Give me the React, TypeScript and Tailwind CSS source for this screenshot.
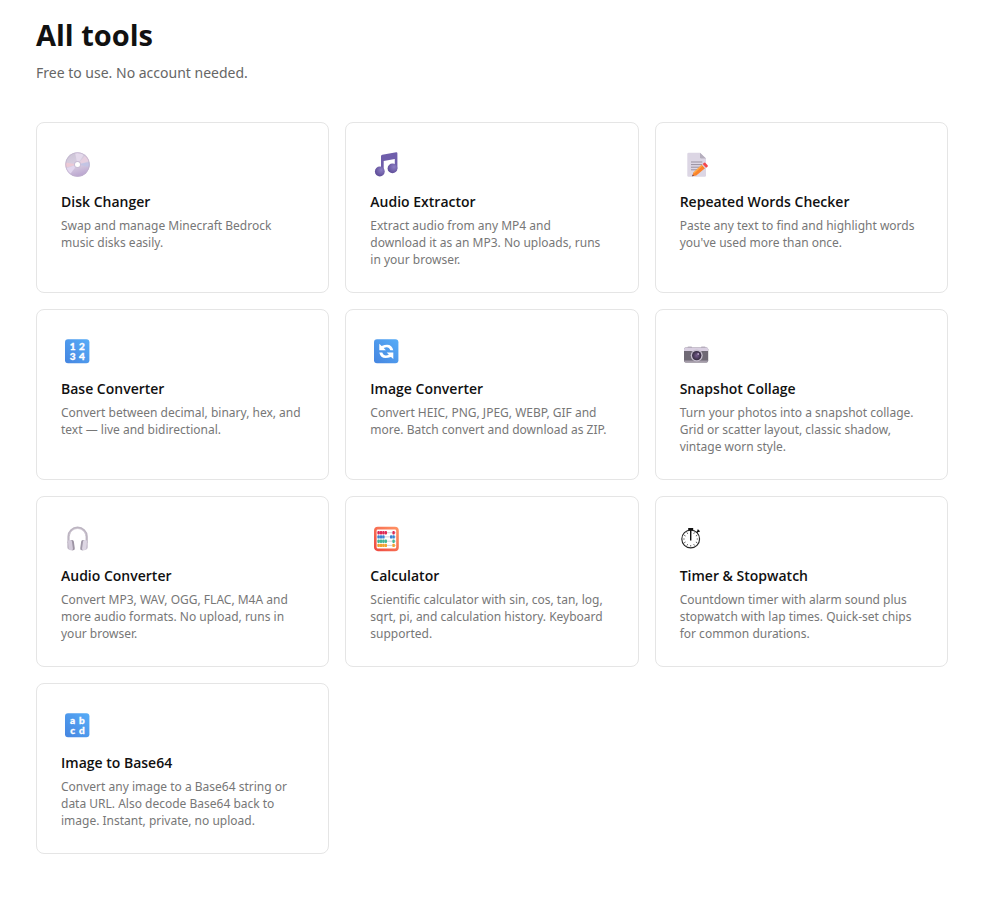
import React from "react";

type Tool = {
  href: string;
  name: string;
  description: string;
  icon: React.ReactNode;
};

const Icon = ({ children }: { children: React.ReactNode }) => (
  <svg viewBox="0 0 36 36" className="mb-2 h-9 w-9" aria-hidden="true">
    {children}
  </svg>
);

const BlueTile = ({ id, children }: { id: string; children: React.ReactNode }) => (
  <Icon>
    <defs>
      <linearGradient id={id} x1="1" y1="0" x2="0" y2="1">
        <stop offset="0" stopColor="#57adf8" />
        <stop offset="1" stopColor="#4585e0" />
      </linearGradient>
    </defs>
    <rect x="4" y="5.3" width="24.4" height="24" rx="3" fill={`url(#${id})`} />
    {children}
  </Icon>
);

const LetterTile = ({ id, chars }: { id: string; chars: string[] }) => (
  <BlueTile id={id}>
    <g fill="#fff" stroke="#fff" strokeWidth="0.3" fontFamily="Lato, sans-serif" fontSize="10" fontWeight="900" textAnchor="middle">
      <text x="11.6" y="15.6">{chars[0]}</text>
      <text x="20.8" y="15.6">{chars[1]}</text>
      <text x="11.6" y="25.7">{chars[2]}</text>
      <text x="20.8" y="25.7">{chars[3]}</text>
    </g>
  </BlueTile>
);

const DiscIcon = () => (
  <Icon>
    <defs>
      <linearGradient id="disc" x1="0.3" y1="0" x2="0.6" y2="1">
        <stop offset="0" stopColor="#ccc4d6" />
        <stop offset="0.5" stopColor="#d9cfe2" />
        <stop offset="1" stopColor="#b9a3cf" />
      </linearGradient>
    </defs>
    <circle cx="16.5" cy="17.5" r="12.2" fill="url(#disc)" />
    <path d="M16.5 17.5 14 5.6A12.2 12.2 0 0 1 23 7.2Z" fill="#e4d9eb" />
    <path d="M16.5 17.5 24.5 8.3A12.2 12.2 0 0 1 28.2 14Z" fill="#e6cfe0" />
    <path d="M16.5 17.5 28.4 15A12.2 12.2 0 0 1 28.4 20Z" fill="#c3c4e4" />
    <path d="M16.5 17.5 4.5 15.5A12.2 12.2 0 0 0 4.7 20.5Z" fill="#ecc9d5" />
    <path d="M16.5 17.5 5 21.5A12.2 12.2 0 0 0 9 27.2Z" fill="#e2d6ef" />
    <circle cx="16.5" cy="17.5" r="11.8" fill="none" stroke="#bfb1cc" strokeWidth="0.7" />
    <circle cx="16.5" cy="17.5" r="3.5" fill="#c9bdd5" />
    <circle cx="16.5" cy="17.5" r="2.5" fill="#fff" />
  </Icon>
);

const NotesIcon = () => (
  <Icon>
    <defs>
      <radialGradient id="note" cx="0.65" cy="0.35" r="0.7">
        <stop offset="0" stopColor="#8d7fc4" />
        <stop offset="1" stopColor="#5c4a96" />
      </radialGradient>
    </defs>
    <path
      d="M11 9.2Q11 7.9 12.3 7.7L26.2 5.3Q27.4 5.2 27.4 6.4V21.5H24.8V12L13.7 14V24.5H11Z"
      fill="#6f5eab"
    />
    <circle cx="9.8" cy="24.5" r="4.9" fill="url(#note)" />
    <circle cx="22.5" cy="21.4" r="4.9" fill="url(#note)" />
  </Icon>
);

const MemoIcon = () => (
  <Icon>
    <path d="M7.3 7Q7.3 5.7 8.6 5.7H20L26 11.5V28.5Q26 29.8 24.7 29.8H8.6Q7.3 29.8 7.3 28.5Z" fill="#dcd6e4" />
    <path d="M20 5.7 26 11.5H21.2Q20 11.5 20 10.3Z" fill="#b5aebd" />
    <path d="M11 15H22.3M11 17.6H22.3M11 20.2H20M11 22.8H17" stroke="#99919f" strokeWidth="1" />
    <path d="M12.2 29.2 13.5 25.5 21.8 17.8 25 21.2 16.3 28.5Z" fill="#fb832b" />
    <path d="M13.5 25.5 21.8 17.8 22.7 18.8 14.3 26.6Z" fill="#ffab46" />
    <path d="M21.8 17.8 23.2 16.5 26.4 20 25 21.2Z" fill="#dcc8cf" />
    <path d="M22.7 17 23.9 15.9Q24.7 15.2 25.5 16L27.6 18.2Q28.2 19 27.5 19.7L26.2 20.7Z" fill="#f4454a" />
    <path d="M12.1 29.3 12.7 27.5 14 28.8Z" fill="#5c4055" />
  </Icon>
);

const RefreshIcon = () => (
  <BlueTile id="refresh">
    <path d="M9.3 9.8V16.3H15.9L13.7 14Q18.8 11.9 20.3 16.3H23.3Q21.6 8.2 11.6 11.9Z" fill="#fff" />
    <path d="M23.3 25V18.5H16.7L18.9 20.8Q13.8 22.9 12.3 18.5H9.3Q11 26.6 21 22.9Z" fill="#fff" />
  </BlueTile>
);

const CameraIcon = () => (
  <Icon>
    <defs>
      <radialGradient id="lens">
        <stop offset="0" stopColor="#765d8d" />
        <stop offset="1" stopColor="#352b40" />
      </radialGradient>
    </defs>
    <rect x="7.5" y="12.6" width="4.5" height="2" rx="0.7" fill="#bdb4c2" />
    <rect x="21" y="12.6" width="4.5" height="2" rx="0.7" fill="#bdb4c2" />
    <rect x="4" y="13.6" width="24.2" height="14.8" rx="1.7" fill="#6f6975" />
    <path d="M4 17V15.2Q4 13.6 5.6 13.6H26.6Q28.2 13.6 28.2 15.2V17Z" fill="#d9cfe1" />
    <path d="M4 26.5H28.2Q28.2 28.4 26.5 28.4H5.7Q4 28.4 4 26.5Z" fill="#a49ca9" />
    <circle cx="16.7" cy="21.6" r="6" fill="#c7bfce" />
    <circle cx="16.7" cy="21.6" r="4.7" fill="url(#lens)" />
    <circle cx="18.2" cy="20" r="0.9" fill="#bba7c9" />
  </Icon>
);

const HeadphonesIcon = () => (
  <Icon>
    <path d="M7.5 22V15.5A9.1 8.8 0 0 1 25.7 15.5V22" fill="none" stroke="#bcb4c1" strokeWidth="2.2" />
    <path d="M8.5 14A8.2 7.6 0 0 1 24.7 14" fill="none" stroke="#d5ced9" strokeWidth="0.7" />
    <path d="M6.3 22Q6.3 19.2 9.5 19.2V29Q6.3 28.5 6.3 26Z" fill="#c0b8c6" />
    <path d="M26.8 22Q26.8 19.2 23.5 19.2V29Q26.8 28.5 26.8 26Z" fill="#c9c1d0" />
    <rect x="9.2" y="19" width="4.1" height="10.4" rx="1.8" fill="#9d94a4" transform="rotate(-8 11 24)" />
    <rect x="19.7" y="19" width="4.1" height="10.4" rx="1.8" fill="#a199a9" transform="rotate(8 22 24)" />
    <rect x="7.6" y="19" width="3.8" height="10.3" rx="1.5" fill="#d4ccdb" transform="rotate(-8 9.5 24)" />
    <rect x="21.6" y="19" width="3.8" height="10.3" rx="1.5" fill="#ddd6e3" transform="rotate(8 23.5 24)" />
  </Icon>
);

const beadRows = [
  { y: 11.7, color: "#df2855", left: [8.6, 11, 13.4, 15.8], right: [23.6] },
  { y: 15.9, color: "#3b83d2", left: [8.6, 11, 13.4], right: [21.2, 23.6] },
  { y: 20.2, color: "#42b695", left: [8.6, 11, 13.4, 15.8], right: [23.6] },
  { y: 24.4, color: "#f3a32e", left: [8.6, 11, 13.4, 15.8], right: [23.6] },
];

const AbacusIcon = () => (
  <Icon>
    <defs>
      <linearGradient id="abacus" x1="1" y1="0" x2="0" y2="1">
        <stop offset="0" stopColor="#ff9263" />
        <stop offset="1" stopColor="#ef4b42" />
      </linearGradient>
    </defs>
    <rect x="5.3" y="7.1" width="22.2" height="21.8" rx="2.6" fill="#fff" stroke="url(#abacus)" strokeWidth="2.6" />
    {beadRows.map((row) => (
      <g key={row.y} fill={row.color}>
        <path d={`M6.6 ${row.y}H26.2`} stroke="#b6afbe" strokeWidth="0.6" />
        {[...row.left, ...row.right].map((x) => (
          <rect key={x} x={x - 1.2} y={row.y - 1.7} width="2.4" height="3.4" rx="0.9" />
        ))}
      </g>
    ))}
  </Icon>
);

const ticks = [0, 30, 60, 90, 120, 150, 180, 210, 240, 270, 300, 330];

const StopwatchIcon = () => (
  <Icon>
    <circle cx="10.7" cy="18" r="8.9" fill="#fff" stroke="#262626" strokeWidth="1.1" />
    {ticks.map((deg) => (
      <path key={deg} d="M10.7 10.5V12" stroke="#444" strokeWidth="0.8" transform={`rotate(${deg} 10.7 18)`} />
    ))}
    <path d="M8.2 7H13.2V9.2H8.2Z" fill="#111" />
    <path d="M10.7 9V19.5" stroke="#111" strokeWidth="1.4" />
    <path d="m16.7 11.5 1.8-1.8M17.5 8.8l2 2" stroke="#111" strokeWidth="1.4" />
  </Icon>
);

const tools: Tool[] = [
  {
    href: "#disk-changer",
    name: "Disk Changer",
    description: "Swap and manage Minecraft Bedrock music disks easily.",
    icon: <DiscIcon />,
  },
  {
    href: "#audio-extractor",
    name: "Audio Extractor",
    description: "Extract audio from any MP4 and download\u00a0it as an MP3. No uploads, runs in\u00a0your browser.",
    icon: <NotesIcon />,
  },
  {
    href: "#repeated-words-checker",
    name: "Repeated Words Checker",
    description: "Paste any text to find and highlight words you've used more than once.",
    icon: <MemoIcon />,
  },
  {
    href: "#base-converter",
    name: "Base Converter",
    description: "Convert between decimal, binary, hex, and text — live and bidirectional.",
    icon: <LetterTile id="numbers" chars={["1", "2", "3", "4"]} />,
  },
  {
    href: "#image-converter",
    name: "Image Converter",
    description: "Convert HEIC, PNG, JPEG, WEBP, GIF and more. Batch convert and download as ZIP.",
    icon: <RefreshIcon />,
  },
  {
    href: "#snapshot-collage",
    name: "Snapshot Collage",
    description: "Turn your photos into a snapshot collage. Grid or scatter layout, classic shadow, vintage worn style.",
    icon: <CameraIcon />,
  },
  {
    href: "#audio-converter",
    name: "Audio Converter",
    description: "Convert MP3, WAV, OGG, FLAC, M4A and more audio formats. No upload, runs in your browser.",
    icon: <HeadphonesIcon />,
  },
  {
    href: "#calculator",
    name: "Calculator",
    description: "Scientific calculator with sin, cos, tan, log, sqrt, pi, and calculation history. Keyboard supported.",
    icon: <AbacusIcon />,
  },
  {
    href: "#timer",
    name: "Timer & Stopwatch",
    description: "Countdown timer with alarm sound plus stopwatch with lap times. Quick-set chips for common durations.",
    icon: <StopwatchIcon />,
  },
  {
    href: "#image-to-base64",
    name: "Image to Base64",
    description: "Convert any image to a Base64 string or data URL. Also decode Base64 back to image. Instant, private, no upload.",
    icon: <LetterTile id="letters" chars={["a", "b", "c", "d"]} />,
  },
];

const ToolCard = ({ tool }: { tool: Tool }) => (
  <a
    href={tool.href}
    className="flex flex-col rounded-lg border border-[#e5e5e5] bg-white p-6 transition-colors hover:border-[#111]"
  >
    {tool.icon}
    <h2 className="mb-1 font-['Open_Sans',sans-serif] text-[14px] font-semibold leading-[22px] text-[#111]">
      {tool.name}
    </h2>
    <p className="text-[12px] leading-[17px] text-[#777]">{tool.description}</p>
  </a>
);

export default function App() {
  return (
    <main className="bg-white pb-15 pl-9 pr-[57px] pt-4 font-['Noto_Sans',sans-serif]">
      <header className="mb-[38px]">
        <h1 className="mb-2 font-['Open_Sans',sans-serif] text-[29px] font-bold leading-[38px] text-[#111]">
          All tools
        </h1>
        <p className="text-[14px] leading-[22px] text-[#666]">Free to use. No account needed.</p>
      </header>
      <section className="grid auto-rows-fr grid-cols-1 gap-4 sm:grid-cols-2 md:grid-cols-3">
        {tools.map((tool) => (
          <ToolCard key={tool.href} tool={tool} />
        ))}
      </section>
    </main>
  );
}
